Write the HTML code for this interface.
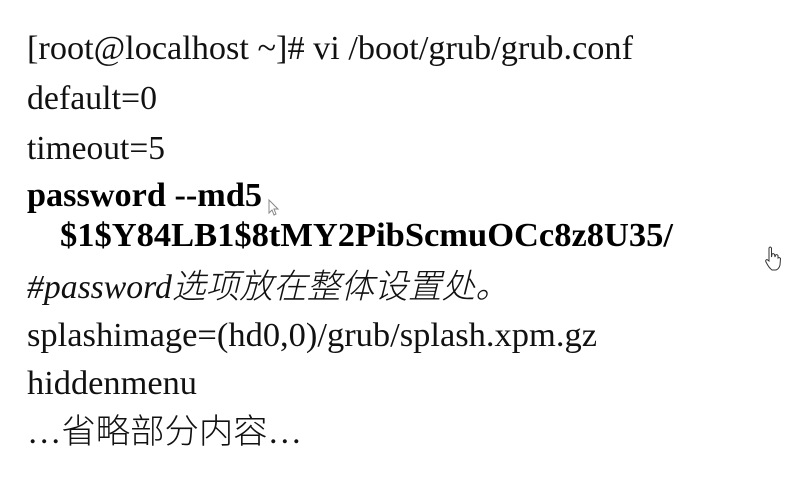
<!DOCTYPE html>
<html><head><meta charset="utf-8"><style>
html,body{margin:0;padding:0;background:#fff;width:803px;height:480px;overflow:hidden}
.l{position:absolute;white-space:nowrap;font-family:"Liberation Serif","Noto Serif CJK SC",serif;font-size:34px;line-height:34px;color:#111;transform-origin:0 0}
.b{font-weight:bold;color:#000}
.i{font-style:italic}
.cj{font-family:"Liberation Serif","Noto Sans CJK SC",sans-serif;font-weight:300}
</style></head><body>
<div class="l" data-w="606" style="left:27px;top:32px">[root@localhost ~]# vi /boot/grub/grub.conf</div>
<div class="l" data-w="130" style="left:27px;top:82px">default=0</div>
<div class="l" data-w="138" style="left:27px;top:132px">timeout=5</div>
<div class="l b" data-w="235" style="left:27px;top:179px">password --md5</div>
<div class="l b" data-w="613" style="left:60px;top:219px">$1$Y84LB1$8tMY2PibScmuOCc8z8U35/</div>
<div class="l i" data-w="482" style="left:27px;top:271px">#password<span class="cj">选项放在整体设置处。</span></div>
<div class="l" data-w="570" style="left:27px;top:319px">splashimage=(hd0,0)/grub/splash.xpm.gz</div>
<div class="l" data-w="170" style="left:27px;top:367px">hiddenmenu</div>
<div class="l" data-w="275" style="left:27px;top:416px">…<span class="cj">省略部分内容</span>…</div>
<svg style="position:absolute;left:268px;top:199px" width="12" height="18" viewBox="0 0 12 18"><path d="M1 1 L1 14 L4 11 L6 16 L8 15 L6 10 L10 10 Z" fill="#fff" stroke="#888" stroke-width="1"/></svg>
<svg style="position:absolute;left:763px;top:246px" width="20" height="26" viewBox="0 0 20 26"><path d="M6 2 Q7 0 8.5 2 L8.5 11 L9 8 Q10.5 7 11.5 8.5 L12 11 L12.5 9 Q14 8 15 9.5 L15 12 Q16.5 11 17.5 12.5 L17 19 Q16 23 13 24 L9 24 Q6 22 3 16 Q2 14 4 13.5 L6 15 Z" fill="#fff" stroke="#333" stroke-width="1"/></svg>
<script>
document.querySelectorAll('.l').forEach(function(e){var w=e.getBoundingClientRect().width;var t=+e.getAttribute('data-w');if(w>0)e.style.transform='scaleX('+(t/w)+')';});
</script>
</body></html>
